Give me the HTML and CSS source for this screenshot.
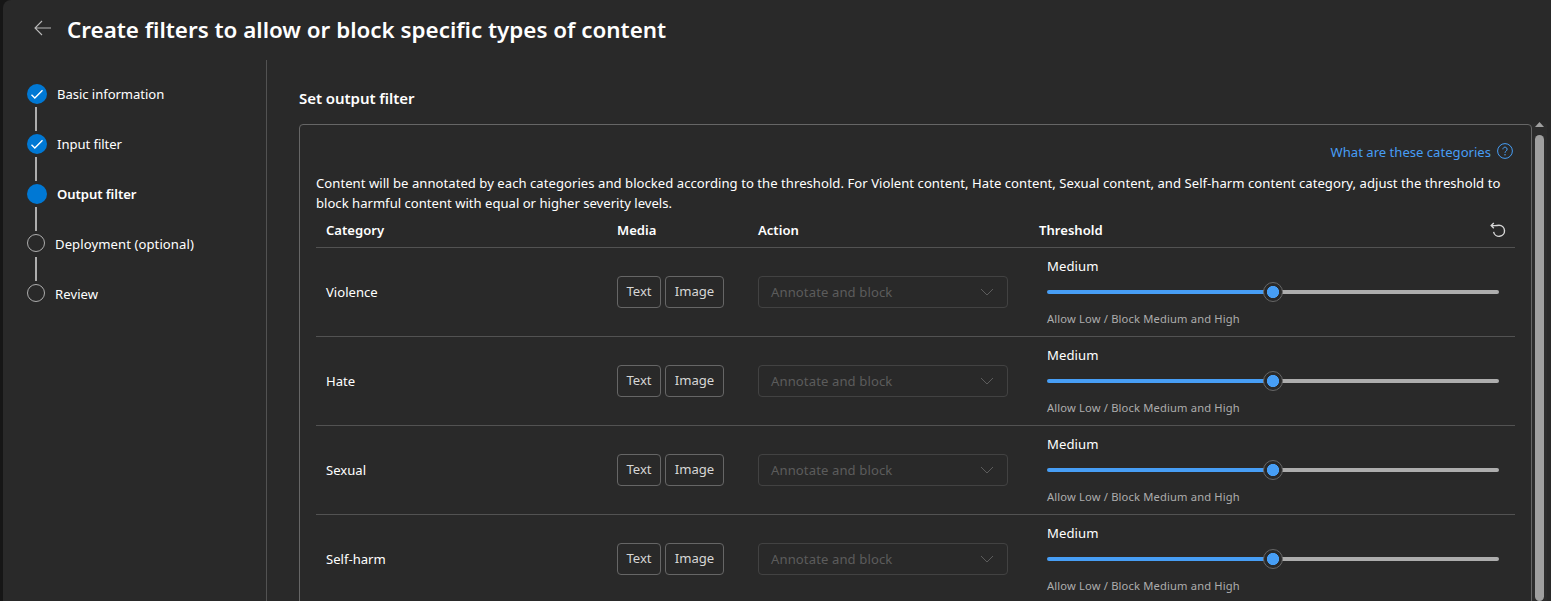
FILE: index.html
```html
<!DOCTYPE html>
<html lang="en">
<head>
<meta charset="utf-8">
<title>Create filters to allow or block specific types of content</title>
<link rel="stylesheet" href="styles.css">
</head>
<body>
<div class="panel">
  <header class="header">
    <svg class="back" width="18" height="16" viewBox="0 0 18 16"><path d="M8 1 1 8l7 7M1 8h16"/></svg>
    <h1 class="title">Create filters to allow or block specific types of content</h1>
  </header>
  <div class="body">
    <nav class="steps">
      <div class="step done"><span class="dot"><svg width="20" height="20" viewBox="0 0 20 20"><path d="M4.500 10.800l3.300 3.200 7.700-7.700"/></svg></span><span class="label">Basic information</span></div>
      <div class="step done"><span class="dot"><svg width="20" height="20" viewBox="0 0 20 20"><path d="M4.500 10.800l3.300 3.200 7.700-7.700"/></svg></span><span class="label">Input filter</span></div>
      <div class="step current"><span class="dot"></span><span class="label">Output filter</span></div>
      <div class="step todo"><span class="dot"></span><span class="label">Deployment (optional)</span></div>
      <div class="step todo last"><span class="dot"></span><span class="label">Review</span></div>
    </nav>
    <main class="main">
      <h2 class="subtitle">Set output filter</h2>
      <div class="scroller">
        <section class="card">
          <div class="help"><a class="help-link">What are these categories</a>
            <svg width="16" height="16" viewBox="0 0 16 16"><circle cx="8" cy="8" r="7.4"/><path d="M5.9 6.3a2.1 2.1 0 1 1 3.4 1.6C8.5 8.500 8 8.900 8 9.800"/><circle class="fill" cx="8" cy="11.700" r=".75"/></svg>
          </div>
          <p class="intro"><span class="line1">Content will be annotated by each categories and blocked according to the threshold. For Violent content, Hate content, Sexual content, and Self-harm content category, adjust the threshold to</span><br><span class="line2">block harmful content with equal or higher severity levels.</span></p>
          <div class="row head">
            <span class="name">Category</span><span>Media</span><span>Action</span>
            <span class="threshold-head"><span>Threshold</span>
              <svg class="reset" width="16" height="16" viewBox="0 0 16 16"><path d="M3.800 1 1.200 3.600l2.600 2.600M1.500 3.600h3.500c1.500 0 2.500-.3 4-.3a5.500 5.500 0 1 1-5.400 6.500"/></svg></span>
          </div>
          <div class="row"><span class="name">Violence</span><span class="tags"><span class="tag text">Text</span><span class="tag image">Image</span></span><span class="select"><span>Annotate and block</span><svg width="14" height="8" viewBox="0 0 14 8"><path d="M1 1l6 6 6-6"/></svg></span><span class="level"><span class="value">Medium</span><span class="track"><span class="thumb"></span></span><span class="hint">Allow Low / Block Medium and High</span></span></div>
          <div class="row"><span class="name">Hate</span><span class="tags"><span class="tag text">Text</span><span class="tag image">Image</span></span><span class="select"><span>Annotate and block</span><svg width="14" height="8" viewBox="0 0 14 8"><path d="M1 1l6 6 6-6"/></svg></span><span class="level"><span class="value">Medium</span><span class="track"><span class="thumb"></span></span><span class="hint">Allow Low / Block Medium and High</span></span></div>
          <div class="row"><span class="name">Sexual</span><span class="tags"><span class="tag text">Text</span><span class="tag image">Image</span></span><span class="select"><span>Annotate and block</span><svg width="14" height="8" viewBox="0 0 14 8"><path d="M1 1l6 6 6-6"/></svg></span><span class="level"><span class="value">Medium</span><span class="track"><span class="thumb"></span></span><span class="hint">Allow Low / Block Medium and High</span></span></div>
          <div class="row"><span class="name">Self-harm</span><span class="tags"><span class="tag text">Text</span><span class="tag image">Image</span></span><span class="select"><span>Annotate and block</span><svg width="14" height="8" viewBox="0 0 14 8"><path d="M1 1l6 6 6-6"/></svg></span><span class="level"><span class="value">Medium</span><span class="track"><span class="thumb"></span></span><span class="hint">Allow Low / Block Medium and High</span></span></div>
        </section>
        <div class="scrollbar"><svg width="9" height="5" viewBox="0 0 9 5"><path d="M4.500 0 9 5H0z"/></svg><span class="bar"></span></div>
      </div>
    </main>
  </div>
</div>
</body>
</html>
```
FILE: styles.css
```css
* { box-sizing: border-box; }
body {
  margin: 0;
  height: 601px;
  overflow: hidden;
  background: #161616;
  padding-left: 3px;
  font: 13.1px/20px "Noto Sans", "Open Sans", sans-serif;
  color: #fff;
}
h1, h2, p { margin: 0; }
svg { display: block; flex: none; fill: none; stroke: currentColor; }
.panel { height: 601px; background: #292929; border-top-left-radius: 8px; overflow: hidden; display: flex; flex-direction: column; }
.header { height: 60px; flex: none; display: flex; padding: 14px 0 0 31px; }
.back { margin-top: 6px; margin-right: 15px; color: #b8b8b8; stroke-width: 1.1; }
.title { font-size: 22.4px; line-height: 32px; font-weight: 600; white-space: nowrap; }
.body { flex: 1; display: flex; min-height: 0; }
.steps { width: 264px; border-right: 1px solid #525252; padding: 24px 0 0 24px; }
.step { display: flex; height: 50px; position: relative; }
.step::after { content: ""; position: absolute; left: 8px; top: 23px; width: 2px; height: 24px; background: #adadad; }
.step.last::after { display: none; }
.dot { flex: none; width: 20px; height: 20px; border-radius: 50%; background: #0078d4; margin-right: 10px; }
.dot svg { stroke-width: 1.4; }
.todo .dot { width: 18px; height: 18px; background: none; border: 1px solid #adadad; }
.label { white-space: nowrap; letter-spacing: -0.06px; }
.todo .label { letter-spacing: 0.08px; }
.current .label { font-weight: 600; }
.main { flex: 1; padding: 26px 0 0 32px; display: flex; flex-direction: column; min-width: 0; }
.subtitle { font-size: 15px; line-height: 24px; font-weight: 600; margin-bottom: 14px; letter-spacing: -0.05px; }
.scroller { flex: 1; display: flex; min-height: 0; }
.card { width: 1233px; height: 520px; border: 1px solid #666; border-radius: 4px; padding: 16px; flex: none; }
.help { display: flex; justify-content: flex-end; gap: 6px; height: 32px; padding-right: 2px; color: #479ef5; line-height: 22px; }
.help svg { margin-top: 2px; }
.help .fill { fill: currentColor; stroke: none; }
.intro { white-space: nowrap; height: 40px; }
.line1 { letter-spacing: 0.037px; }
.row { display: grid; grid-template-columns: 301px 141px 281px 476px; height: 89px; border-bottom: 1px solid #525252; align-items: center; }
.row.head { height: 35px; font-weight: 600; }
.name { padding-left: 10px; }
.threshold-head { display: flex; justify-content: space-between; padding-right: 9px; }
.reset { margin-top: 2px; color: #d6d6d6; stroke-width: 1.4; }
.tags { display: flex; gap: 4px; }
.tag { height: 32px; line-height: 28px; border: 1px solid #666; border-radius: 4px; text-align: center; color: #d6d6d6; }
.tag.text { width: 44px; }
.tag.image { width: 59px; }
.select { width: 250px; height: 32px; border: 1px solid #424242; border-radius: 4px; display: flex; align-items: center; justify-content: space-between; padding: 0 13px 0 12px; color: #5c5c5c; letter-spacing: 0.1px; }
.level { display: flex; flex-direction: column; width: 452px; margin-left: 8px; height: 88px; padding-top: 8px; }
.value { letter-spacing: 0.1px; }
.track { height: 4px; margin: 14px 0 16px; border-radius: 2px; background: linear-gradient(to right, #479ef5 50%, #adadad 50%); display: flex; justify-content: center; align-items: center; }
.thumb { flex: none; width: 20px; height: 20px; border-radius: 50%; border: 1px solid #666; background: radial-gradient(circle, #479ef5 5.8px, #292929 6.3px); }
.hint { font-size: 11.2px; line-height: 18px; letter-spacing: 0.15px; color: #adadad; }
.scrollbar { width: 15px; background: #2c2c2c; display: flex; flex-direction: column; align-items: center; padding-top: 0; }
.scrollbar svg { fill: #a0a0a0; stroke: none; margin-top: -2px; }
.bar { width: 9px; height: 500px; margin-top: 8px; border-radius: 5px; background: #9f9f9f; }
```
